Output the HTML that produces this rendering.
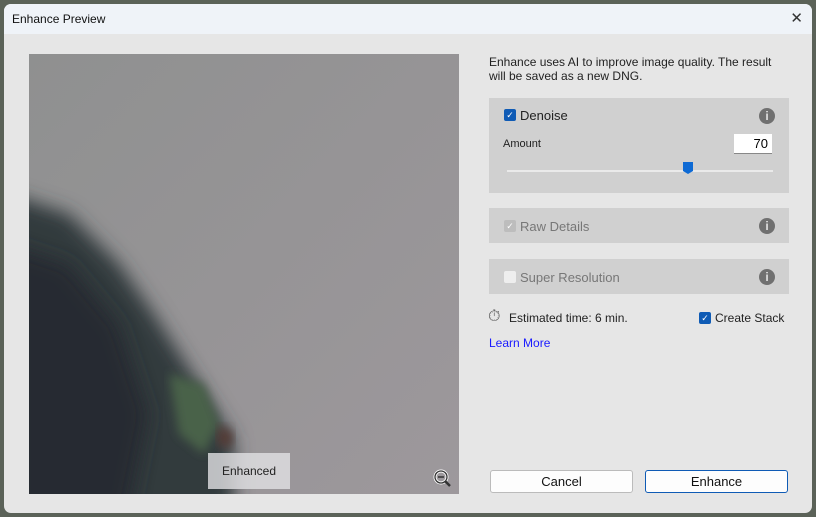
<!DOCTYPE html>
<html><head><style>
body{margin:0;width:816px;height:517px;overflow:hidden;background:#5b6258;font-family:"Liberation Sans",sans-serif;position:relative}
.win{position:absolute;left:4px;top:4px;width:808px;height:509px;background:#e6e6e6;border-radius:7px;overflow:hidden}
.title{height:30px;background:#eff3f8;font-size:12px;line-height:30px;padding-left:8px;color:#111;position:relative}
.x{position:absolute;right:9px;top:0;font-size:15px;color:#333;font-weight:100}
.img{position:absolute;left:25px;top:50px;width:430px;height:440px;overflow:hidden;background:#98969a}
.enh{position:absolute;left:179px;top:399px;width:82px;height:36px;background:rgba(225,225,227,.8);font-size:12px;line-height:36px;text-align:center;color:#222}
.r{position:absolute;font-size:12px;color:#222}
.panel{position:absolute;left:485px;width:300px;background:#d0d0d0}
.cb{position:absolute;width:12px;height:12px;border-radius:2px;background:#0f5bb5;color:#fff;font-size:9px;line-height:12px;text-align:center}
.info{position:absolute;right:14px;width:16px;height:16px;border-radius:50%;background:#707070;color:#e0e0e0;font:bold 12px/16px "Liberation Sans",sans-serif;text-align:center}
.btn{position:absolute;top:466px;width:141px;height:21px;background:#fdfdfd;border:1px solid #bbb;border-radius:3px;font-size:13px;line-height:21px;text-align:center;color:#111}
</style></head><body>
<div class="win">
<div class="title">Enhance Preview<span class="x">✕</span></div>
<div class="img">
<svg width="430" height="440" viewBox="0 0 430 440">
<defs>
<filter id="b"><feGaussianBlur stdDeviation="9"/></filter>
<filter id="b2"><feGaussianBlur stdDeviation="5"/></filter>
<linearGradient id="g" x1="0" y1="0" x2="1" y2="1"><stop offset="0" stop-color="#8f9090"/><stop offset="1" stop-color="#9d989c"/></linearGradient>
</defs>
<rect width="430" height="440" fill="url(#g)"/>
<path d="M-20,140 L40,160 L90,210 L125,260 L170,330 L205,385 L205,460 L-20,460Z" fill="#333b3c" filter="url(#b)"/>
<path d="M-20,190 L40,210 L90,270 L120,360 L100,460 L-20,460Z" fill="#252b30" filter="url(#b)"/>
<path d="M140,320 L175,330 L190,370 L175,400 L150,380Z" fill="#4a6248" filter="url(#b2)"/>
<path d="M190,370 L205,380 L200,395 L188,390Z" fill="#553a36" filter="url(#b2)"/>
</svg>
<div class="enh">Enhanced</div>
<svg style="position:absolute;left:404px;top:415px" width="20" height="20" viewBox="0 0 20 20"><circle cx="8" cy="8" r="6" fill="none" stroke="#fff" stroke-width="3"/><circle cx="8" cy="8" r="6" fill="none" stroke="#333" stroke-width="1.3"/><line x1="5" y1="8" x2="11" y2="8" stroke="#333" stroke-width="1.5"/><line x1="12" y1="12" x2="17" y2="17" stroke="#333" stroke-width="2.5"/></svg>
</div>
<div class="r" style="left:485px;top:51px;line-height:14px;width:300px">Enhance uses AI to improve image quality. The result will be saved as a new DNG.</div>
<div class="panel" style="top:94px;height:95px">
<div class="cb" style="left:15px;top:11px">✓</div>
<div class="r" style="left:31px;top:10px;font-size:13px">Denoise</div>
<div class="info" style="top:10px">i</div>
<div class="r" style="left:14px;top:40px;font-size:11px">Amount</div>
<div style="position:absolute;left:245px;top:36px;width:38px;height:20px;background:#fff;border-bottom:1px solid #888;font-size:13px;line-height:20px;text-align:right;box-sizing:border-box;padding-right:4px">70</div>
<div style="position:absolute;left:18px;top:72px;width:266px;height:2px;background:#eaeaea"></div>
<div style="position:absolute;left:194px;top:64px;width:10px;height:12px;background:#0e6ad4;clip-path:polygon(0 0,100% 0,100% 75%,50% 100%,0 75%)"></div>
</div>
<div class="panel" style="top:204px;height:35px">
<div class="cb" style="left:15px;top:12px;background:#bdbdbd">✓</div>
<div class="r" style="left:31px;top:11px;font-size:13px;color:#777">Raw Details</div>
<div class="info" style="top:10px">i</div>
</div>
<div class="panel" style="top:255px;height:35px">
<div class="cb" style="left:15px;top:12px;background:#eee"></div>
<div class="r" style="left:31px;top:11px;font-size:13px;color:#777">Super Resolution</div>
<div class="info" style="top:10px">i</div>
</div>
<div class="r" style="left:484px;top:304px;font-size:16px;color:#555">⏱</div>
<div class="r" style="left:505px;top:307px">Estimated time: 6 min.</div>
<div class="cb" style="left:695px;top:308px">✓</div>
<div class="r" style="left:711px;top:307px">Create Stack</div>
<div class="r" style="left:485px;top:332px;color:#1a1aff">Learn More</div>
<div class="btn" style="left:486px">Cancel</div>
<div class="btn" style="left:641px;border-color:#0f5bb5">Enhance</div>
</div>
</body></html>
